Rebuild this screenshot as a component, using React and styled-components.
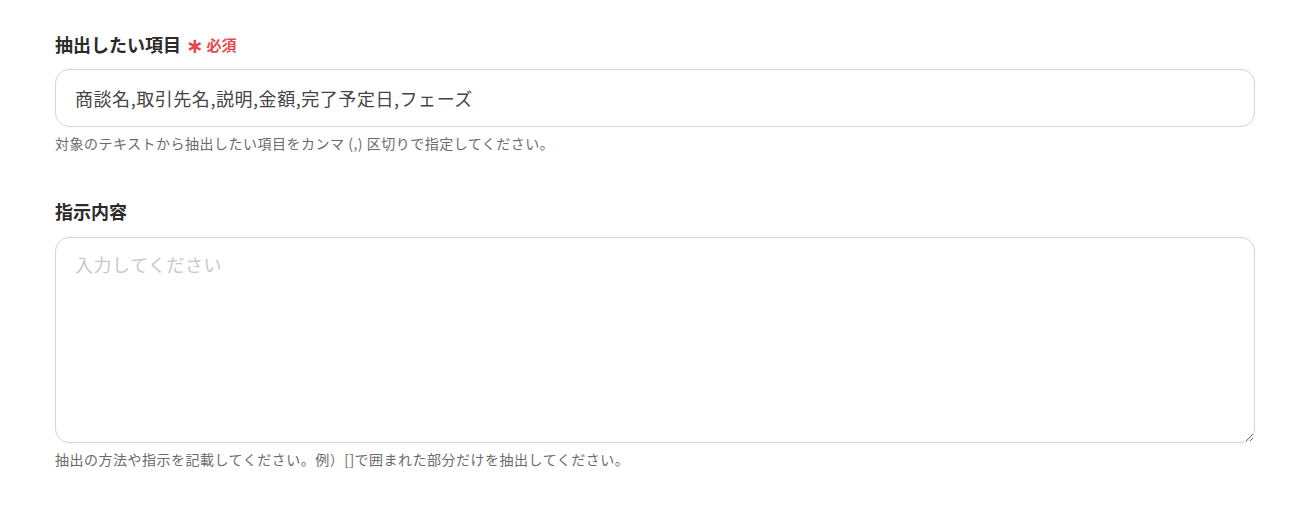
import React from "react";
import styled, { createGlobalStyle } from "styled-components";

const Global = createGlobalStyle`
  html, body { margin: 0; padding: 0; background: #fff; }
  body { font-family: "Noto Sans CJK JP", "Noto Sans", sans-serif; color: #333; }
  * { box-sizing: border-box; }
`;

const Page = styled.div`
  width: 1316px;
  padding: 32px 61px 40px 55px;
  display: flex;
  flex-direction: column;
  gap: 47px;
`;

const Field = styled.div`
  display: flex;
  flex-direction: column;
`;

const LabelRow = styled.div`
  display: flex;
  align-items: center;
  gap: 5px;
  height: 24px;
  margin-bottom: 13px;
`;

const Label = styled.label`
  font-size: 18px;
  font-weight: 700;
  color: #2b2b2b;
  line-height: 24px;
  margin-top: ${(p) => (p.$shift ? "-2px" : "0")};
`;

const Required = styled.span`
  display: inline-flex;
  align-items: center;
  gap: 3px;
  color: #e5484d;
  font-size: 15px;
  font-weight: 700;
  margin-top: 1px;
`;

const Star = styled.span`
  font-size: 21px;
  line-height: 1;
  font-family: "DejaVu Sans", sans-serif;
  margin-top: 3px;
`;

const Input = styled.input`
  width: 100%;
  height: 58px;
  border: 1px solid #d4d4d8;
  border-radius: 14px;
  padding: 0 19px;
  font-family: inherit;
  font-size: 18px;
  letter-spacing: 0.55px;
  color: #444;
  outline: none;
  background: #fff;
`;

const TextArea = styled.textarea`
  width: 100%;
  height: 206px;
  border: 1px solid #d4d4d8;
  border-radius: 14px;
  padding: 13px 19px;
  font-family: inherit;
  font-size: 18px;
  letter-spacing: 0.5px;
  color: #444;
  outline: none;
  resize: vertical;
  display: block;
  &::placeholder { color: #c8c8c8; }
`;

const Help = styled.p`
  margin: 6px 0 0;
  font-size: 14px;
  line-height: 20px;
  letter-spacing: 0.5px;
  color: #6b6b6b;
`;

export default function App() {
  return (
    <>
      <Global />
      <Page>
        <Field>
          <LabelRow>
            <Label>抽出したい項目</Label>
            <Required><Star>∗</Star>必須</Required>
          </LabelRow>
          <Input defaultValue="商談名,取引先名,説明,金額,完了予定日,フェーズ" />
          <Help>対象のテキストから抽出したい項目をカンマ (,) 区切りで指定してください。</Help>
        </Field>
        <Field>
          <LabelRow>
            <Label $shift>指示内容</Label>
          </LabelRow>
          <TextArea placeholder="入力してください" />
          <Help>抽出の方法や指示を記載してください。例）[]で囲まれた部分だけを抽出してください。</Help>
        </Field>
      </Page>
    </>
  );
}
